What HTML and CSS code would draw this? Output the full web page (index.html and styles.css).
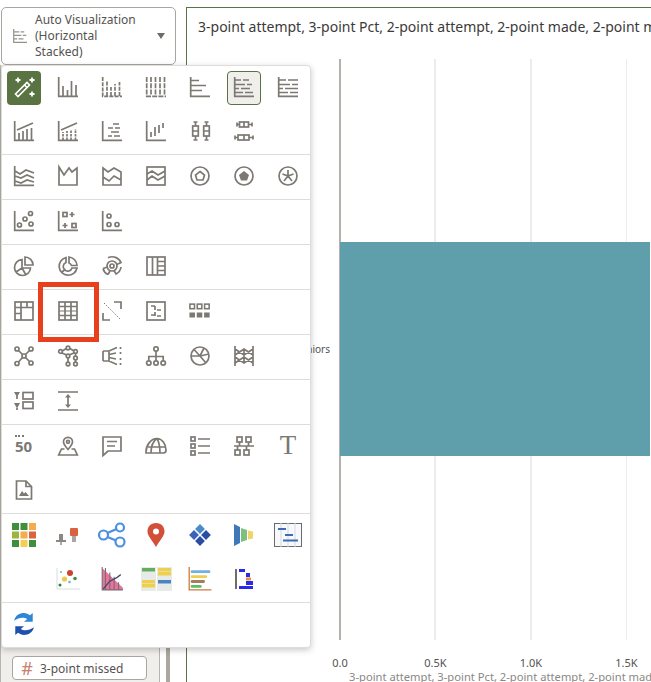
FILE: index.html
```html
<!DOCTYPE html>
<html lang="en">
<head>
<meta charset="utf-8">
<title>Visualization picker</title>
<link rel="stylesheet" href="styles.css">
</head>
<body>
<div class="app">
  <aside class="side">
    <div class="select">
      <svg class="ic select-icon" viewBox="0 0 20 20"><path d="M1 0V19H20M1 4H9M11 4H16M1 9H12M14 9H19M1 14H6M8 14H15"/></svg>
      <span class="select-text">Auto Visualization (Horizontal Stacked)</span>
      <span class="caret"></span>
    </div>
    <div class="data-panel">
      <div class="chip"><span class="hash">#</span><span>3-point missed</span></div>
    </div>
  </aside>
  <div class="splitter"></div>
  <main class="main">
    <h1 class="title">3-point attempt, 3-point Pct, 2-point attempt, 2-point made, 2-point missed</h1>
    <div class="chart">
      <div class="cat"><span>Seniors</span></div>
      <div class="plot"><div class="bar"></div></div>
    </div>
    <div class="ticks">
      <div class="tick"><span>0.0</span></div>
      <div class="tick"><span>0.5K</span></div>
      <div class="tick"><span>1.0K</span></div>
      <div class="tick"><span>1.5K</span></div>
    </div>
    <div class="axis-title">3-point attempt, 3-point Pct, 2-point attempt, 2-point made, 2-point missed</div>
  </main>
</div>

<div class="menu">
  <div class="group">
    <div class="cell auto"><svg viewBox="0 0 22 22" class="wand"><path d="M2.500 17L5 19.500L16.500 8L14 5.500Z"/><path d="M11.500 8L14 10.500"/><path class="solid" d="M5 0.500V5.500M2.500 3H7.500M19 0.500V5.500M16.500 3H21.500M19 14.500V19.500M16.500 17H21.500"/></svg></div>
    <div class="cell"><svg class="ic" viewBox="0 0 20 20"><path d="M.7 0V19.300H20M5 19V9M9.500 19V13M13.500 19V4M18 19V8"/></svg></div>
    <div class="cell"><svg class="ic" viewBox="0 0 20 20"><path d="M.7 0V19.300H20M5 19V4M9 19V10M13 19V7M17.500 19V5" stroke-dasharray="4 1.200"/></svg></div>
    <div class="cell"><svg class="ic" viewBox="0 0 20 20"><path d="M.7 0V19.300H20M5 0V18M9.500 0V18M14 0V18M18.500 0V18" stroke-dasharray="5 1.200"/></svg></div>
    <div class="cell"><svg class="ic" viewBox="0 0 20 20"><path d="M.7 0V19.300H20M1 3.500H9M1 8.500H16M1 13.500H12"/></svg></div>
    <div class="cell selected"><svg class="ic" viewBox="0 0 20 20"><path d="M.7 0V19.300H20M1 3H7M9 3H15M1 7.500H11M13 7.500H18M1 11.500H5M7 11.500H16M1 15.500H9M11 15.500H19"/></svg></div>
    <div class="cell"><svg class="ic" viewBox="0 0 20 20"><path d="M.7 0V19.300H20M1 3H8M10 3H20M1 7.500H12M14 7.500H20M1 11.500H5M7 11.500H20M1 15.500H10M12 15.500H20"/></svg></div>
    <div class="cell"><svg class="ic" viewBox="0 0 20 20"><path d="M.7 0V19.300H20M5 19V12M9 19V10M13 19V8M17.500 19V7M3 9L19 2"/></svg></div>
    <div class="cell"><svg class="ic" viewBox="0 0 20 20"><path d="M.7 0V19.300H20M3 9L19 2"/><path class="ic-dash" d="M5 19V11M9 19V10M13 19V9M17.500 19V8"/></svg></div>
    <div class="cell"><svg class="ic" viewBox="0 0 20 20"><path d="M.7 0V19.300H20M11 3H17M6 7H11M13 7H18M9 11H17M6 15H10M12 15H18"/></svg></div>
    <div class="cell"><svg class="ic" viewBox="0 0 20 20"><path d="M.7 0V19.300H20M5 16V11M9 15V6M13 12V4M17 7V2"/></svg></div>
    <div class="cell"><svg class="ic" viewBox="0 0 20 20"><path d="M3.500 1H7.500M5.500 1V5M5.500 15V19M3.500 19H7.500M14.500 1H18.500M16.500 1V5M16.500 15V19M14.500 19H18.500M2.700 10H8.300M13.700 10H19.300"/><rect x="2.700" y="5" width="5.600" height="10"/><rect x="13.700" y="5" width="5.600" height="10"/></svg></div>
    <div class="cell"><svg class="ic" viewBox="0 0 20 20"><path d="M3 1.500V5.500M3 3.500H6M14 3.500H18M18 1.500V5.500M1 14.500V18.500M1 16.500H4M15 16.500H19M19 14.500V18.500M10 1V6M10 14V19"/><rect x="5.500" y="1" width="9" height="5"/><rect x="4" y="14" width="11" height="5"/></svg></div>
  </div>

  <div class="group">
    <div class="cell"><svg class="ic" viewBox="0 0 20 20"><path d="M.7 0V19.300H20M1 5L6 8L12 4L20 7M1 10L7 12L13 9L20 12M1 15L7 17L13 14L20 16"/></svg></div>
    <div class="cell"><svg class="ic" viewBox="0 0 20 20"><path d="M1 1L6 9L11 2L14 6L19 2V19H1Z"/></svg></div>
    <div class="cell"><svg class="ic" viewBox="0 0 20 20"><path d="M1 2L6 6L12 2L19 6V19H1ZM1 11L7 15L12 10L19 14"/></svg></div>
    <div class="cell"><svg class="ic" viewBox="0 0 20 20"><rect x="1" y="1" width="18" height="18"/><path d="M1 8L6 5L12 9L19 5M1 14L6 10L12 14L19 10"/></svg></div>
    <div class="cell"><svg class="ic" viewBox="0 0 20 20"><circle cx="10" cy="10" r="9"/><path d="M10 5.500L14.500 9L13 14H7L5.500 9Z"/></svg></div>
    <div class="cell"><svg class="ic" viewBox="0 0 20 20"><circle cx="10" cy="10" r="9"/><path class="solid" d="M10 5L15 9L13 14.500H7L5 9Z"/></svg></div>
    <div class="cell"><svg class="ic" viewBox="0 0 20 20"><circle cx="10" cy="10" r="9"/><path d="M10 10V4M10 10L15.500 8M10 10L14 15M10 10L6 15M10 10L4.500 8"/></svg></div>
  </div>

  <div class="group">
    <div class="cell"><svg class="ic" viewBox="0 0 20 20"><path d="M.7 0V19.300H20"/><circle cx="5.500" cy="14" r="2"/><circle cx="11" cy="8" r="2"/><circle cx="16.500" cy="2.500" r="2"/><circle cx="17" cy="13" r="2"/></svg></div>
    <div class="cell"><svg class="ic" viewBox="0 0 20 20"><path d="M.7 0V19.300H20M14 1V6M11.500 3.500H16.500M7 12V17M4.500 14.500H9.500"/><rect x="5" y="1.500" width="4" height="4"/><rect x="14" y="12.500" width="4" height="4"/></svg></div>
    <div class="cell"><svg class="ic" viewBox="0 0 20 20"><path d="M.7 0V19.300H20"/><circle cx="7" cy="5" r="2"/><circle cx="7" cy="13.500" r="2"/><circle cx="15" cy="13.500" r="2"/></svg></div>
  </div>

  <div class="group">
    <div class="cell"><svg class="ic" viewBox="0 0 20 20"><path d="M8 3.500A8 8 0 1 0 16.500 12H8ZM11 1V9H19A8 8 0 0 0 11 1ZM8 12L2 16M8 12L12 19"/></svg></div>
    <div class="cell"><svg class="ic" viewBox="0 0 20 20"><path d="M8 1.500A9 9 0 1 0 19 12H14A4.500 4.500 0 1 1 8 6.500ZM11 1V7A4 4 0 0 1 13.500 9.500H19A9 9 0 0 0 11 1ZM4 16L7.500 13"/></svg></div>
    <div class="cell"><svg class="ic" viewBox="0 0 20 20"><circle cx="10" cy="10" r="2"/><circle cx="10" cy="10" r="5"/><path d="M6 1.800A9.500 9.500 0 0 1 19 6.500L14.800 8.500M1 12.500L5.500 11M6 18.500A9 9 0 0 1 1 12.500M6 18.500L8 15M19 11A9 9 0 0 1 14 18L12 14.500"/></svg></div>
    <div class="cell"><svg class="ic" viewBox="0 0 20 20"><rect x="1" y="1" width="18" height="18"/><path d="M6.500 1V19M11.500 1V19M11.500 5.500H19M11.500 10H19M11.500 14.500H19"/></svg></div>
  </div>

  <div class="group">
    <div class="cell"><svg class="ic" viewBox="0 0 20 20"><rect x="1" y="1" width="18" height="18"/><path d="M1 6.500H19M7 1V19M13 1V6.500M7 12.500H1"/></svg></div>
    <div class="cell"><svg class="ic" viewBox="0 0 20 20"><rect x="1" y="1" width="18" height="18"/><path d="M1 5.500H19M1 14.500H19M7 1V19M13 1V19"/><path class="thin" d="M1 10H19"/></svg></div>
    <div class="cell"><svg class="ic" viewBox="0 0 20 20"><path d="M12 1H19V8M8 19H1V12"/><path class="thin" d="M2 2L18 18" stroke-dasharray="1.500 1.500"/></svg></div>
    <div class="cell"><svg class="ic" viewBox="0 0 20 20"><rect x="1" y="1" width="18" height="18"/><path d="M5 5H9M9 5V9M11 9H15M5 14H9M9 11V15M11 15H15"/></svg></div>
    <div class="cell"><svg class="ic wide-ic" viewBox="0 0 24 20"><rect x="1" y="2.500" width="5" height="5"/><rect x="9" y="2.500" width="5" height="5"/><rect x="17" y="2.500" width="5" height="5"/><path class="solid" d="M.5 11.500H6.500V17H.5ZM8.500 11.500H14.500V17H8.500ZM16.500 11.500H22.500V17H16.500Z"/></svg></div>
  </div>

  <div class="group">
    <div class="cell"><svg class="ic" viewBox="0 0 20 20"><circle cx="10" cy="10" r="2"/><circle cx="3" cy="3" r="2"/><circle cx="17" cy="3" r="2"/><circle cx="3" cy="17.500" r="2"/><circle cx="17" cy="17" r="2"/><path d="M4.500 4.500L8.500 8.500M15.500 4.500L11.500 8.500M4.500 16L8.500 11.500M15.500 15.500L11.500 11.500"/></svg></div>
    <div class="cell"><svg class="ic" viewBox="0 0 20 20"><circle cx="2.500" cy="5.500" r="1.800"/><circle cx="10" cy="2" r="1.800"/><circle cx="17.500" cy="5.500" r="1.800"/><circle cx="10" cy="10" r="1.800"/><circle cx="17.500" cy="12" r="1.800"/><circle cx="10" cy="18" r="1.800"/><circle cx="17.500" cy="18" r="1.800"/><path d="M4.300 5L8.300 2.500M12 2.500L16 5M4 7L8.500 9M16 7L11 9M10 12V16M17.500 7.500V10M17.500 14V16"/></svg></div>
    <div class="cell"><svg class="ic" viewBox="0 0 20 20"><path d="M1 5H7L15 1.500M1 15H7L15 18.500M1 5V15M7 5V15M7 8.500L14 7M7 11.500L14 13M18.500 1V3M18.500 6V8M18.500 12V14M18.500 17V19" /></svg></div>
    <div class="cell"><svg class="ic" viewBox="0 0 20 20"><circle cx="10" cy="3" r="2.200"/><circle cx="2.800" cy="17" r="2.200"/><circle cx="10" cy="17" r="2.200"/><circle cx="17.200" cy="17" r="2.200"/><path d="M10 5.200V14.800M2.800 14.800V10.500H17.200V14.800"/></svg></div>
    <div class="cell"><svg class="ic" viewBox="0 0 20 20"><circle cx="10" cy="10" r="9"/><path d="M1 10H10L14 2M10 10L4 3.500M10 10L19 8M10 10L16 17"/></svg></div>
    <div class="cell"><svg class="ic" viewBox="0 0 20 20"><path d="M1 0V20M10 3V17M19 0V20M1 3L10 9L19 3M1 9L10 3L19 9M1 11L10 17L19 11M1 17L10 11L19 17"/></svg></div>
  </div>

  <div class="group">
    <div class="cell"><svg class="ic" viewBox="0 0 20 20"><path class="solid" d="M0 1H6L3 6ZM0 12H6L3 17.500Z"/><rect x="9" y="1.500" width="10" height="6.500"/><rect x="9" y="11" width="10" height="6.500"/><path d="M3 5V8M3 17V19"/></svg></div>
    <div class="cell"><svg class="ic" viewBox="0 0 20 20"><path d="M0 1H20M0 19H20M10 5V15"/><path class="solid" d="M7 6.500L10 3L13 6.500ZM7 13.500L10 17L13 13.500Z"/></svg></div>
  </div>

  <div class="group">
    <div class="cell stat"><span class="dots"></span><span class="fifty">50</span></div>
    <div class="cell"><svg class="ic" viewBox="0 0 20 20"><path d="M10 13.500C7.500 10.500 5.500 8.500 5.500 5.800A4.500 4.500 0 0 1 14.500 5.800C14.500 8.500 12.500 10.500 10 13.500Z"/><circle cx="10" cy="5.800" r="1.500"/><path d="M6.500 13H3.500L.7 19H19.300L16.500 13H13.500"/></svg></div>
    <div class="cell"><svg class="ic" viewBox="0 0 20 20"><path d="M1 1H19V15H6L1 19.500ZM5 5.500H15M5 10H13"/></svg></div>
    <div class="cell"><svg class="ic wide-ic" viewBox="0 0 22 20"><path d="M1 16C1 9 6 2.500 12 2.500C17 2.500 21 8 21 14C21 16 20 17 18.500 17H1ZM3 11H21M6 17C6 10 8 5 12 2.500M15 17C15 10 14 6 12 2.500"/></svg></div>
    <div class="cell"><svg class="ic" viewBox="0 0 20 20"><rect x="1" y="1" width="4" height="4"/><rect x="1" y="8" width="4" height="4"/><rect x="1" y="15" width="4" height="4"/><path d="M8 3H20M8 10H20M8 17H20"/></svg></div>
    <div class="cell"><svg class="ic" viewBox="0 0 20 20"><rect x="3" y="1" width="5" height="5"/><rect x="12" y="1" width="5" height="5"/><rect x="1" y="14" width="5" height="5"/><rect x="10" y="14" width="5" height="5"/><path d="M0 10H20M5.500 6V10M14.500 6V10M3.500 10V14M12.500 10V14"/></svg></div>
    <div class="cell type">T</div>
    <div class="cell"><svg class="ic" viewBox="0 0 20 20"><path d="M2.500 1H12L17.500 6.500V19H2.500ZM12 1V6.500H17.500"/><path class="solid" d="M5 16L8 11L10 13.500L11.500 12L15 16Z"/></svg></div>
  </div>

  <div class="group">
    <div class="cell"><svg viewBox="0 0 24 24" class="wide"><path fill="#3f8f3f" d="M0 0H7V7H0ZM8.500 0H15.500V7H8.500Z"/><path fill="#f2ad4e" d="M17 0H24V7H17ZM8.500 8.500H15.500V15.500H8.500Z"/><path fill="#9cb53c" d="M0 8.500H7V15.500H0Z"/><path fill="#d9633e" d="M17 8.500H24V15.500H17Z"/><path fill="#3f8f3f" d="M0 17H7V24H0ZM17 17H24V24H17Z"/><path fill="#f3d055" d="M8.500 17H15.500V24H8.500Z"/></svg></div>
    <div class="cell"><svg viewBox="0 0 24 20" class="wide"><path fill="#8a8784" d="M3 9H7V15H10V17H0V15H3Z"/><rect x="4" y="17" width="2" height="3" fill="#aaa"/><rect x="14" y="3" width="8" height="8" rx="1" fill="#d9623f"/><rect x="16" y="11" width="4" height="6" fill="#aaa5a0"/></svg></div>
    <div class="cell"><svg viewBox="0 0 28 24" class="wider"><g fill="none" stroke="#4a90e0" stroke-width="2.200"><circle cx="5.500" cy="12" r="4.500"/><circle cx="22" cy="4.500" r="4"/><circle cx="22" cy="19" r="4.500"/><path d="M9.500 10L18.500 6M9.500 14L18 17.500"/></g></svg></div>
    <div class="cell"><svg viewBox="0 0 20 24" class="tall"><path fill="#d2503a" fill-rule="evenodd" d="M10 0C4.500 0 1.500 4 1.500 8.500C1.500 13 6 17 10 24C14 17 18.500 13 18.500 8.500C18.500 4 15.500 0 10 0ZM10 5.500A3 3 0 1 1 10 11.500A3 3 0 1 1 10 5.500Z"/></svg></div>
    <div class="cell"><svg viewBox="0 0 22 22" class="wide"><path fill="#4a8cc8" d="M11 1L15.500 5.500L11 10L6.500 5.500Z"/><path fill="#3a63b8" d="M5.500 6.500L10 11L5.500 15.500L1 11Z"/><path fill="#2a4ea8" d="M16.500 6.500L21 11L16.500 15.500L12 11ZM11 12L15.500 16.500L11 21L6.500 16.500Z"/></svg></div>
    <div class="cell"><svg viewBox="0 0 20 24" class="tall"><path fill="#3f78b8" d="M0 1L6 4V20L0 23Z"/><path fill="#7ebf7e" d="M7 5L13 7V17L7 19Z"/><path fill="#f0d56a" d="M14 7.500L19 8.500V15.500L14 16.500Z"/></svg></div>
    <div class="cell"><svg viewBox="0 0 28 24" class="wider"><rect x=".5" y=".5" width="27" height="23" fill="#f6f8fb" stroke="#6b6b6b"/><path fill="none" stroke="#d5dbe3" d="M7 0V24M14 0V24M21 0V24"/><path fill="none" stroke="#3b6db3" stroke-width="2" d="M4 6H12M11 12H19M9 17.500H24"/></svg></div>
    <div class="cell"></div>
    <div class="cell"><svg viewBox="0 0 24 22" class="wide"><path fill="none" stroke="#d9dedb" d="M1 0V21H24"/><circle cx="14" cy="5" r="3" fill="#c9452f"/><circle cx="8.500" cy="11" r="2.600" fill="#f0c84a"/><circle cx="19" cy="10.500" r="1.800" fill="#3e8f4a"/><circle cx="4" cy="17" r="1.500" fill="#2f7f45"/><circle cx="5" cy="4" r="1" fill="#62b9c8"/><circle cx="13.500" cy="14" r="1.300" fill="#62b9c8"/></svg></div>
    <div class="cell"><svg viewBox="0 0 20 22" class="wide"><path fill="#e6749b" d="M1 1L20 19V21H1Z"/><path fill="none" stroke="#7d6a76" d="M4 1V21M8 5V21M12 9V21M16 14V21M1 0V21H20"/><path fill="none" stroke="#3d4a66" stroke-width="1.200" d="M2 20L8 13L14 10L18 7"/></svg></div>
    <div class="cell"><svg viewBox="0 0 31 24" class="cards"><rect width="15" height="24" fill="#e8eae8"/><rect x="16" width="15" height="24" fill="#e8eae8"/><rect x="1" y="1" width="13" height="3.500" fill="#63ad63"/><rect x="17" y="1" width="13" height="3.500" fill="#efcf4e"/><rect x="17" y="5" width="13" height="3.500" fill="#efcf4e"/><rect x="1" y="13" width="13" height="3.500" fill="#efcf4e"/><rect x="1" y="17" width="13" height="3.500" fill="#efcf4e"/><rect x="17" y="13" width="13" height="3.500" fill="#4d83c2"/></svg></div>
    <div class="cell"><svg viewBox="0 0 21 22" class="wide"><path fill="none" stroke="#d07a3c" stroke-width="1.200" d="M.6 0V21H21"/><rect x="2" y="3" width="18" height="2.600" rx="1" fill="#6fb2e8"/><rect x="2" y="7.500" width="15" height="2.600" rx="1" fill="#efcf4e"/><rect x="2" y="12" width="13" height="2.600" rx="1" fill="#a67b62"/><rect x="2" y="16.500" width="10" height="2.600" rx="1" fill="#54c06a"/></svg></div>
    <div class="cell"><svg viewBox="0 0 18 20" class="steps"><rect x="0" width="2" height="20" fill="#6d6d6d"/><path fill="#2a2aee" d="M4 0H10V3H4ZM11 4H15V8H11ZM11 12H18V16H11ZM4 17H18V20H4Z"/><rect x="11" y="8.500" width="5" height="3" fill="#e8912e"/></svg></div>
  </div>

  <div class="group">
    <div class="cell"><svg viewBox="0 0 20 22" class="wide"><path fill="#2f86d8" d="M1 8C2 3 6 1 10 1C12 1 14 2 15.500 3L18 1V9H10L13 6.500C10 4.500 5 5 1 8Z"/><path fill="#1f4fb0" d="M19 14C18 19 14 21 10 21C8 21 6 20 4.500 19L2 21V13H10L7 15.500C10 17.500 15 17 19 14Z"/></svg></div>
  </div>

  <div class="callout"></div>
</div>
</body>
</html>
```

FILE: styles.css
```css
* { box-sizing: border-box; }
html, body { margin: 0; height: 100%; }
body {
  position: relative;
  width: 651px;
  height: 682px;
  overflow: hidden;
  background: #fff;
  font-family: "Noto Sans", sans-serif;
  color: #3c3a38;
}
.app { display: flex; height: 682px; }
.side {
  flex: 0 0 166px;
  min-width: 0;
  display: flex;
  flex-direction: column;
  padding-top: 7px;
}
.select {
  flex: 0 0 58px;
  width: 175px;
  margin-left: 1px;
  display: flex;
  align-items: center;
  border: 1px solid #a9a5a0;
  border-radius: 5px;
  background: #fff;
  padding-left: 11px;
  position: relative;
}
.select-text {
  width: 106px;
  margin-left: 8px;
  font-size: 12px;
  line-height: 16px;
  color: #55524f;
}
.caret {
  margin-left: 16px;
  border-left: 4.500px solid transparent;
  border-right: 4.500px solid transparent;
  border-top: 6px solid #6f6b67;
}
.data-panel {
  flex: 1;
  width: 160px;
  display: flex;
  flex-direction: column;
  justify-content: flex-end;
  padding: 0 0 2px 11px;
  background: #f1efec;
  border-left: 1px solid #b8b5b0;
  border-right: 1px solid #b8b5b0;
}
.chip {
  width: 135px;
  height: 24px;
  display: flex;
  align-items: center;
  gap: 7px;
  padding-left: 8px;
  background: #fff;
  border: 1px solid #a9a5a0;
  border-radius: 4px;
  font-size: 12px;
  color: #55524f;
}
.hash { width: 12px; text-align: center; font-size: 18px; line-height: 1; color: #c9806f; }
.splitter { flex: 0 0 4px; margin-top: 65px; background: #aaa6a0; }
.main {
  flex: 1;
  min-width: 0;
  margin: 7px 0 0 16px;
  border-top: 1px solid #5a7343;
  border-left: 1px solid #5a7343;
  overflow: hidden;
}
.title {
  margin: 0;
  height: 51px;
  padding: 9px 0 0 11px;
  font-size: 14px;
  line-height: 20px;
  font-weight: 400;
  white-space: nowrap;
  color: #3c3a38;
}
.chart { display: flex; height: 581px; padding-bottom: 0; }
.cat {
  flex: 0 0 152px;
  display: flex;
  align-items: center;
  justify-content: flex-end;
  padding: 0 9px 2px 0;
  font-size: 10px;
  color: #55524f;
}
.plot {
  flex: 1;
  min-width: 0;
  display: flex;
  align-items: center;
  padding-bottom: 2px;
  border-left: 2px solid #b5b2ae;
  background-image: repeating-linear-gradient(to right, transparent 0, transparent 93.500px, #ececea 93.500px, #ececea 95.500px);
}
.bar { flex: 0 0 100%; height: 214px; margin-left: -1px; background: #5f9fac; }
.ticks { display: flex; margin: 10px 0 0 153px; }
.tick { flex: 0 0 95.500px; height: 14px; }
.tick span {
  display: inline-block;
  transform: translateX(-50%);
  font-size: 11px;
  line-height: 14px;
  color: #55524f;
}
.axis-title {
  margin: 6px 0 0 162px;
  white-space: nowrap;
  font-size: 11.200px;
  line-height: 14px;
  color: #8a8784;
}

.menu {
  position: absolute;
  left: 1px;
  top: 65px;
  width: 310px;
  background: #fff;
  border: 1px solid #dfddd9;
  border-radius: 4px;
  box-shadow: 0 2px 6px rgba(0, 0, 0, .22);
}
.group {
  display: flex;
  flex-wrap: wrap;
  gap: 10px;
  padding: 5px;
  border-top: 1px solid #dfddd9;
}
.group:first-child { border-top: 0; }
.cell {
  flex: 0 0 34px;
  height: 34px;
  display: flex;
  align-items: center;
  justify-content: center;
  padding-bottom: 2px;
  border-radius: 4px;
  border: 1px solid transparent;
}
.selected { background: #f1efec; border-color: #5a7343; }
.auto { background: #5a7343; padding-bottom: 0; }
.wand { width: 22px; height: 22px; flex: none; fill: none; stroke: #fff; stroke-width: 1.600; }
.wand .solid { stroke-width: 1.800; }
.ic {
  width: 20px;
  height: 20px;
  flex: none;
  overflow: visible;
  fill: none;
  stroke: #7c7872;
  stroke-width: 1.700;
}
.ic .solid { fill: #7c7872; stroke: none; }
.ic .thin { stroke-width: 1; }
.ic .ic-dash { stroke-dasharray: 2.500 1; }
.ic.wide-ic { width: 22px; }
.ic.select-icon { width: 14px; height: 14px; opacity: .8; }
.wide { width: 24px; height: 24px; flex: none; overflow: visible; }
.wider { width: 28px; height: 24px; flex: none; overflow: visible; }
.tall { width: 20px; height: 24px; flex: none; overflow: visible; }
.cards { width: 31px; height: 24px; flex: none; overflow: visible; }
.steps { width: 18px; height: 20px; flex: none; overflow: visible; }
.stat {
  flex-direction: column;
  align-items: flex-start;
  justify-content: flex-start;
  padding: 4px 0 0 7px;
  color: #7c7872;
}
.dots { width: 9px; height: 2px; border-top: 2px dotted #7c7872; margin-bottom: 2px; }
.fifty { font-size: 15px; line-height: 14px; font-weight: 700; }
.type {
  font-family: "Liberation Serif", serif;
  font-size: 27px;
  line-height: 1;
  color: #7c7872;
  padding-bottom: 4px;
}
.callout {
  position: absolute;
  left: 36px;
  top: 216px;
  width: 61px;
  height: 60px;
  border: 5px solid #e8401c;
  pointer-events: none;
}
```
